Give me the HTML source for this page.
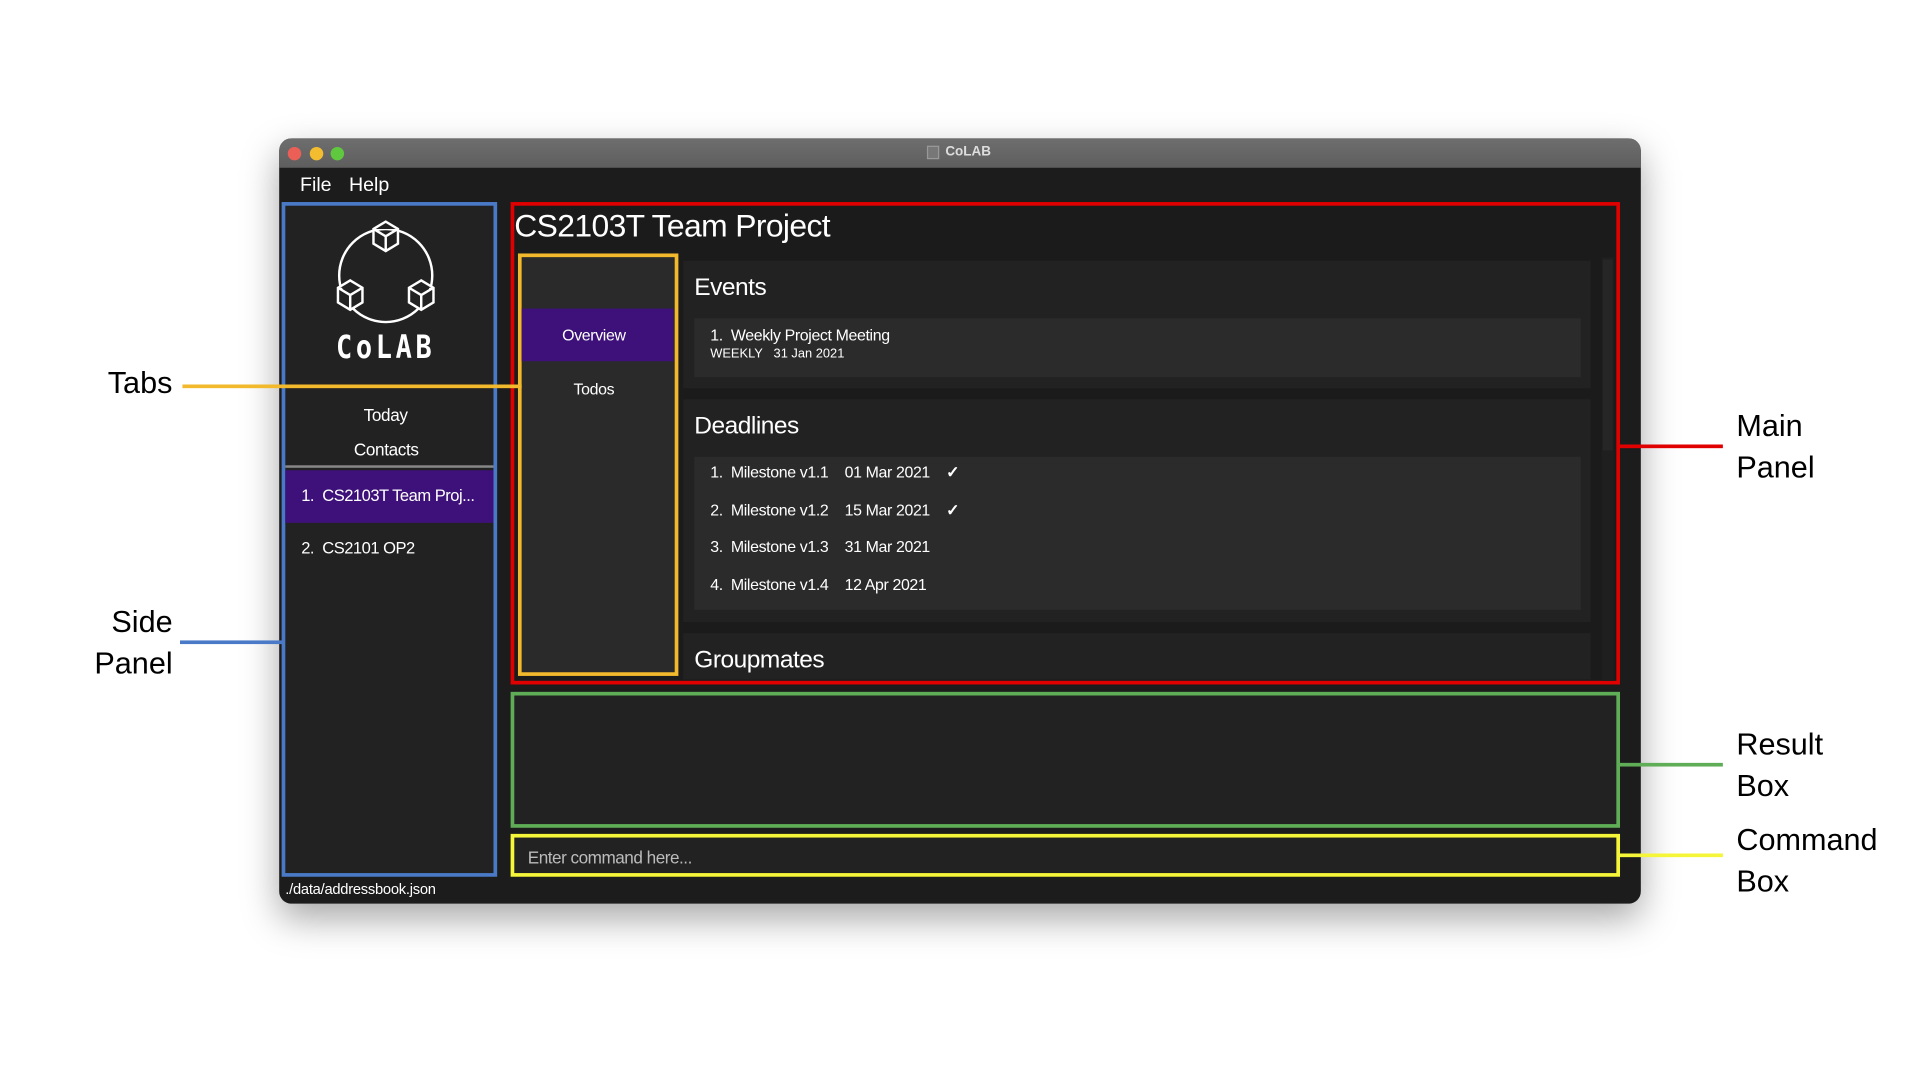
<!DOCTYPE html>
<html><head><meta charset="utf-8"><style>
*{margin:0;padding:0;box-sizing:border-box}
html,body{width:1920px;height:1080px;background:#fff;overflow:hidden}
#s{position:absolute;left:0;top:0;width:1568px;height:882px;transform:scale(1.2245);transform-origin:0 0;font-family:"Liberation Sans",sans-serif}
.a{position:absolute}
.t{position:absolute;white-space:nowrap;line-height:1}
.lbl{position:absolute;font-size:25px;color:#000;line-height:34px}
</style></head><body><div id="s">
<div class="a" style="left:228px;top:113px;width:1112px;height:625px;border-radius:10px;background:#1c1c1c;box-shadow:0 12px 30px rgba(0,0,0,.35);overflow:hidden">
 <div class="a" style="left:0;top:0;width:1112px;height:24px;background:linear-gradient(#6e6e6e,#5e5e5e)"></div>
</div>
<div class="a" style="left:235px;top:120px;width:11px;height:11px;border-radius:50%;background:#ec5f57"></div>
<div class="a" style="left:253px;top:120px;width:11px;height:11px;border-radius:50%;background:#f3bd2f"></div>
<div class="a" style="left:270px;top:120px;width:11px;height:11px;border-radius:50%;background:#5fc83f"></div>
<div class="a" style="left:757px;top:119px;width:10px;height:11px;background:#777;border:1px solid #999"></div>
<div class="t" style="left:772px;top:119px;font-size:11px;font-weight:bold;color:#ddd">CoLAB</div>
<div class="t" style="left:245px;top:144px;font-size:16px;color:#fff">File</div>
<div class="t" style="left:285px;top:144px;font-size:16px;color:#fff">Help</div>

<div class="a" style="left:230px;top:165px;width:176px;height:551px;background:#222;border:3px solid #4a7ac7"></div>
<svg class="a" style="left:265px;top:175px" width="100" height="95" viewBox="265 175 100 95" fill="none" stroke="#fff" stroke-width="2">
 <circle cx="315" cy="225" r="38"/>
 <g fill="#222"><path d="M315 181 l10 6 v12 l-10 6 l-10 -6 v-12z M305 187 l10 6 l10 -6 M315 193 v12"/></g>
 <g fill="#222"><path d="M286 229 l10 6 v12 l-10 6 l-10 -6 v-12z M276 235 l10 6 l10 -6 M286 241 v12"/></g>
 <g fill="#222"><path d="M344 229 l10 6 v12 l-10 6 l-10 -6 v-12z M334 235 l10 6 l10 -6 M344 241 v12"/></g>
</svg>
<div class="t" style="left:315px;top:274px;transform:translateX(-50%) scaleY(1.2);font-size:22px;font-weight:bold;color:#fff;letter-spacing:3px;font-family:'DejaVu Sans Mono',monospace">CoLAB</div>
<div class="t" style="left:297px;top:332px;font-size:14px;color:#fff;letter-spacing:-.3px">Today</div>
<div class="t" style="left:289px;top:360px;font-size:14px;color:#fff;letter-spacing:-.3px">Contacts</div>
<div class="a" style="left:233px;top:380px;width:170px;height:2px;background:#888"></div>
<div class="a" style="left:233px;top:384px;width:170px;height:43px;background:#3d1179"></div>
<div class="t" style="left:246px;top:398px;font-size:13.5px;color:#fff;letter-spacing:-.4px">1.&nbsp; CS2103T Team Proj...</div>
<div class="t" style="left:246px;top:441px;font-size:13.5px;color:#fff;letter-spacing:-.4px">2.&nbsp; CS2101 OP2</div>
<div class="t" style="left:233px;top:720px;font-size:12px;color:#fff;letter-spacing:-.2px">./data/addressbook.json</div>

<div class="a" style="left:417px;top:165px;width:906px;height:394px;background:#1b1b1b;border:3px solid #e00000"></div>
<div class="t" style="left:420px;top:171px;font-size:26px;color:#fff;letter-spacing:-.5px">CS2103T Team Project</div>
<div class="a" style="left:558px;top:213px;width:741px;height:104px;background:#222"></div>
<div class="t" style="left:567px;top:225px;font-size:20px;color:#fff;letter-spacing:-.4px">Events</div>
<div class="a" style="left:567px;top:260px;width:724px;height:48px;background:#2b2b2b"></div>
<div class="t" style="left:580px;top:267px;font-size:13px;color:#fff;letter-spacing:-.3px">1.&nbsp; Weekly Project Meeting</div>
<div class="t" style="left:580px;top:284px;font-size:10.5px;color:#fff">WEEKLY&nbsp;&nbsp; 31 Jan 2021</div>
<div class="a" style="left:558px;top:326px;width:741px;height:182px;background:#222"></div>
<div class="t" style="left:567px;top:338px;font-size:20px;color:#fff;letter-spacing:-.4px">Deadlines</div>
<div class="a" style="left:567px;top:373px;width:724px;height:125px;background:#2b2b2b"></div>
<div class="t" style="left:580px;top:379px;font-size:13px;color:#fff;letter-spacing:-.3px">1.&nbsp; Milestone v1.1&nbsp;&nbsp;&nbsp; 01 Mar 2021&nbsp;&nbsp;&nbsp; <b>✓</b></div>
<div class="t" style="left:580px;top:410px;font-size:13px;color:#fff;letter-spacing:-.3px">2.&nbsp; Milestone v1.2&nbsp;&nbsp;&nbsp; 15 Mar 2021&nbsp;&nbsp;&nbsp; <b>✓</b></div>
<div class="t" style="left:580px;top:440px;font-size:13px;color:#fff;letter-spacing:-.3px">3.&nbsp; Milestone v1.3&nbsp;&nbsp;&nbsp; 31 Mar 2021</div>
<div class="t" style="left:580px;top:471px;font-size:13px;color:#fff;letter-spacing:-.3px">4.&nbsp; Milestone v1.4&nbsp;&nbsp;&nbsp; 12 Apr 2021</div>
<div class="a" style="left:558px;top:517px;width:741px;height:38px;background:#222"></div>
<div class="t" style="left:567px;top:529px;font-size:20px;color:#fff;letter-spacing:-.4px">Groupmates</div>
<div class="a" style="left:1308px;top:210px;width:10px;height:346px;background:#1f1f1f"></div>
<div class="a" style="left:1309px;top:212px;width:8px;height:156px;background:#262626"></div>
<div class="a" style="left:423px;top:207px;width:131px;height:345px;background:#2a2a2a;border:3px solid #f2b92c"></div>
<div class="a" style="left:426px;top:252px;width:124px;height:43px;background:#3d1179"></div>
<div class="t" style="left:485px;top:267px;transform:translateX(-50%);font-size:13px;color:#fff;letter-spacing:-.3px">Overview</div>
<div class="t" style="left:485px;top:311px;transform:translateX(-50%);font-size:13px;color:#fff;letter-spacing:-.3px">Todos</div>

<div class="a" style="left:417px;top:565px;width:906px;height:111px;background:#222;border:3px solid #5fad56"></div>
<div class="a" style="left:417px;top:681px;width:906px;height:35px;background:#222;border:3px solid #f5f53a"></div>
<div class="t" style="left:431px;top:693px;font-size:14px;color:#bbb;letter-spacing:-.4px">Enter command here...</div>

<div class="lbl" style="left:88px;top:296px">Tabs</div>
<div class="a" style="left:149px;top:314px;width:277px;height:3px;background:#f2b92c"></div>
<div class="lbl" style="left:40px;top:491px;width:101px;text-align:right">Side<br>Panel</div>
<div class="a" style="left:147px;top:523px;width:84px;height:3px;background:#4a7ac7"></div>
<div class="lbl" style="left:1418px;top:331px">Main<br>Panel</div>
<div class="a" style="left:1322px;top:363px;width:85px;height:3px;background:#e00000"></div>
<div class="lbl" style="left:1418px;top:591px">Result<br>Box</div>
<div class="a" style="left:1322px;top:623px;width:85px;height:3px;background:#5fad56"></div>
<div class="lbl" style="left:1418px;top:669px">Command<br>Box</div>
<div class="a" style="left:1322px;top:697px;width:85px;height:3px;background:#f5f53a"></div>
</div></body></html>
